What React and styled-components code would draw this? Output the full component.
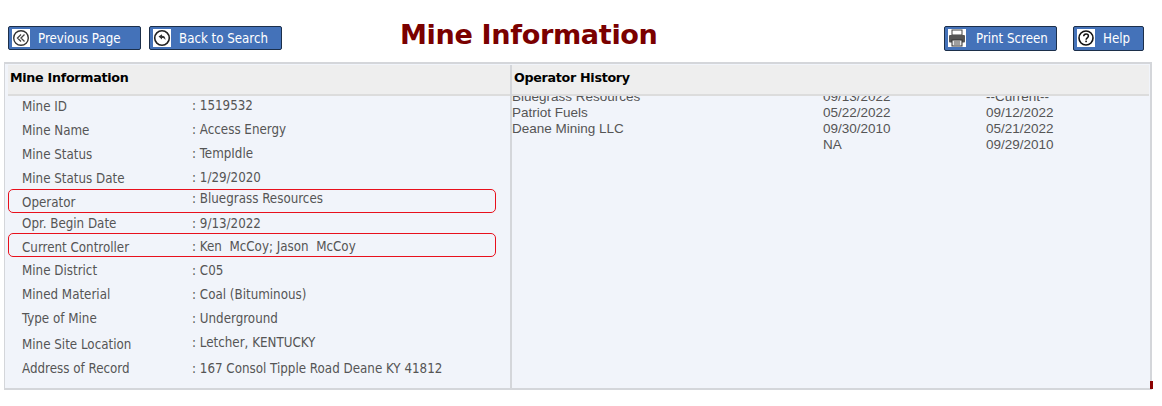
import React from "react";
import styled, { createGlobalStyle } from "styled-components";

const GlobalStyle = createGlobalStyle`
  html, body {
    margin: 0;
    padding: 0;
    background: #fff;
    font-family: "DejaVu Sans Condensed", "DejaVu Sans", sans-serif;
  }
`;

const Page = styled.div`
  width: 1162px;
  height: 406px;
  overflow: hidden;
  position: relative;
`;

const Toolbar = styled.div`
  display: flex;
  align-items: center;
  height: 62px;
  padding: 14px 18px 0 8px;
  box-sizing: border-box;
`;

const ButtonGroup = styled.div`
  display: flex;
  gap: ${(p) => p.$gap}px;
  margin-left: ${(p) => (p.$right ? "auto" : "0")};
`;

const Button = styled.button`
  display: flex;
  align-items: center;
  width: ${(p) => p.$width}px;
  height: ${(p) => p.$height || 24}px;
  padding: 0 0 0 ${(p) => p.$pad || 3}px;
  gap: ${(p) => p.$iconGap || 8}px;
  background: #4472b9;
  border: 1px solid #1c2f4a;
  border-radius: 2px;
  color: #fff;
  font-family: inherit;
  font-size: 13.2px;
  box-sizing: border-box;
`;

const IconBox = styled.svg`
  width: 18px;
  height: 18px;
  flex: none;
  display: block;
`;

const Title = styled.h1`
  margin: 0 0 0 118px;
  font-family: "DejaVu Sans", sans-serif;
  font-size: 27.1px;
  font-weight: 700;
  letter-spacing: -0.35px;
  color: #7a0000;
  position: relative;
  top: -4px;
`;

const Panel = styled.div`
  position: relative;
  margin-left: 4px;
  width: 1148px;
  height: 328px;
  box-sizing: border-box;
  background: #f1f4fa;
  border: 2px solid #d4d6da;
  border-left-width: 1px;
  padding: 1px 1px 0 3px;
  display: grid;
  grid-template-columns: 502px 1fr;
`;

const Column = styled.div`
  display: flex;
  flex-direction: column;
  min-width: 0;
  height: 323px;
  border-left: ${(p) => (p.$divided ? "2px solid #d4d6da" : "none")};
`;

const ColumnHeader = styled.div`
  height: 25px;
  flex: none;
  background: #eeeeee;
  border-bottom: 2px solid #dcdcdc;
  display: flex;
  align-items: center;
  padding-left: 2px;
  padding-bottom: 4px;
  color: #000;
  font-size: 12.7px;
  font-weight: 700;
  font-family: "DejaVu Sans", sans-serif;
  letter-spacing: -0.3px;
`;

const InfoList = styled.div`
  margin-top: -2px;
`;

const InfoRow = styled.div`
  display: grid;
  grid-template-columns: 170px 1fr;
  height: 24px;
  padding-left: 14px;
  align-items: center;
  color: #555;
  font-size: 13.25px;
`;

const Label = styled.span`
  position: relative;
  top: ${(p) => p.$top}px;
`;

const Value = styled.span`
  position: relative;
  top: ${(p) => p.$top}px;
  white-space: pre;
`;

// the red ring drawn over a row
const Ring = styled.div`
  position: absolute;
  left: 3px;
  width: 488px;
  top: ${(p) => p.$top}px;
  height: 24px;
  box-sizing: border-box;
  border: 1px solid #e8101c;
  border-radius: 5px;
  pointer-events: none;
`;

const HistoryScroll = styled.div`
  flex: 1;
  overflow: hidden;
`;

const HistoryTable = styled.div`
  margin-top: -8px;
  display: grid;
  grid-template-columns: 311px 163px 1fr;
  grid-auto-rows: 16px;
  align-items: center;
  color: #555;
  font-family: "Liberation Sans", Arial, sans-serif;
  font-size: 13.5px;
`;

const Corner = styled.div`
  position: absolute;
  right: -3px;
  bottom: -1px;
  width: 3px;
  height: 8px;
  background: #8b0000;
`;

const PrevIcon = () => (
  <IconBox viewBox="0 0 18 18">
    <rect width="18" height="18" fill="#fff" />
    <circle cx="9" cy="9" r="7.3" fill="#fff" stroke="#333" strokeWidth="1.4" />
    <path d="M9 5.5 5.5 9 9 12.5M12.5 5.5 9 9l3.5 3.5" fill="none" stroke="#444" strokeWidth="1.3" />
  </IconBox>
);

const BackIcon = () => (
  <IconBox viewBox="0 0 18 18">
    <rect width="18" height="18" fill="#fff" />
    <circle cx="9" cy="9" r="7.3" fill="#fff" stroke="#222" strokeWidth="1.6" />
    <path d="M5.5 7.5 9 5.2v1.6c2.4 0 3.6 1.4 3.4 4.4-.6-1.6-1.6-2.2-3.4-2.2v1.4z" fill="#333" />
  </IconBox>
);

const PrintIcon = () => (
  <IconBox viewBox="0 0 18 18">
    <rect width="18" height="18" fill="#fff" />
    <rect x="4" y="1" width="10" height="5" fill="#fff" stroke="#444" />
    <rect x="1" y="6" width="16" height="7.5" rx="1" fill="#555" />
    <rect x="4" y="11" width="10" height="6" fill="#e8e8e8" stroke="#333" />
    <path d="M6 13h6M6 15h6" stroke="#555" />
  </IconBox>
);

const HelpIcon = () => (
  <IconBox viewBox="0 0 18 18">
    <rect width="18" height="18" fill="#fff" />
    <circle cx="9" cy="9" r="7" fill="#fff" stroke="#111" strokeWidth="1.6" />
    <path d="M6.7 7.2C6.8 5.8 7.8 5 9.1 5c1.4 0 2.3.8 2.3 2 0 1.8-2.3 1.8-2.3 3.7" fill="none" stroke="#111" strokeWidth="1.5" />
    <rect x="8.3" y="11.6" width="1.6" height="1.6" fill="#111" />
  </IconBox>
);

const infoRows = [
  { label: "Mine ID", value: ": 1519532", labelTop: 0, valueTop: -1 },
  { label: "Mine Name", value: ": Access Energy", labelTop: 0, valueTop: -1 },
  { label: "Mine Status", value: ": TempIdle", labelTop: 0, valueTop: -1 },
  { label: "Mine Status Date", value: ": 1/29/2020", labelTop: 0, valueTop: -1 },
  { label: "Operator", value: ": Bluegrass Resources", labelTop: 0, valueTop: -4 },
  { label: "Opr. Begin Date", value: ": 9/13/2022", labelTop: -3, valueTop: -3 },
  { label: "Current Controller", value: ": Ken  McCoy; Jason  McCoy", labelTop: -3, valueTop: -4 },
  { label: "Mine District", value: ": C05", labelTop: -4, valueTop: -4 },
  { label: "Mined Material", value: ": Coal (Bituminous)", labelTop: -4, valueTop: -4 },
  { label: "Type of Mine", value: ": Underground", labelTop: -4, valueTop: -4 },
  { label: "Mine Site Location", value: ": Letcher, KENTUCKY", labelTop: -2, valueTop: -4 },
  { label: "Address of Record", value: ": 167 Consol Tipple Road Deane KY 41812", labelTop: -2, valueTop: -2 },
];

const historyRows = [
  ["Bluegrass Resources", "09/13/2022", "--Current--"],
  ["Patriot Fuels", "05/22/2022", "09/12/2022"],
  ["Deane Mining LLC", "09/30/2010", "05/21/2022"],
  ["", "NA", "09/29/2010"],
];

export default function App() {
  return (
    <Page>
      <GlobalStyle />
      <Toolbar>
        <ButtonGroup $gap={8}>
          <Button $width={133}>
            <PrevIcon />
            Previous Page
          </Button>
          <Button $width={133}>
            <BackIcon />
            Back to Search
          </Button>
        </ButtonGroup>
        <Title>Mine Information</Title>
        <ButtonGroup $gap={16} $right>
          <Button $width={113} $height={25} $iconGap={10}>
            <PrintIcon />
            Print Screen
          </Button>
          <Button $width={71} $height={25}>
            <HelpIcon />
            Help
          </Button>
        </ButtonGroup>
      </Toolbar>
      <Panel>
        <Column>
          <ColumnHeader>Mine Information</ColumnHeader>
          <InfoList>
            {infoRows.map((row) => (
              <InfoRow key={row.label}>
                <Label $top={row.labelTop}>{row.label}</Label>
                <Value $top={row.valueTop}>{row.value}</Value>
              </InfoRow>
            ))}
          </InfoList>
        </Column>
        <Column $divided>
          <ColumnHeader>Operator History</ColumnHeader>
          <HistoryScroll>
            <HistoryTable>
              {historyRows.map((row) =>
                row.map((cell, i) => <span key={row[1] + i}>{cell}</span>)
              )}
            </HistoryTable>
          </HistoryScroll>
        </Column>
        <Ring $top={125} />
        <Ring $top={169} />
        <Corner />
      </Panel>
    </Page>
  );
}
